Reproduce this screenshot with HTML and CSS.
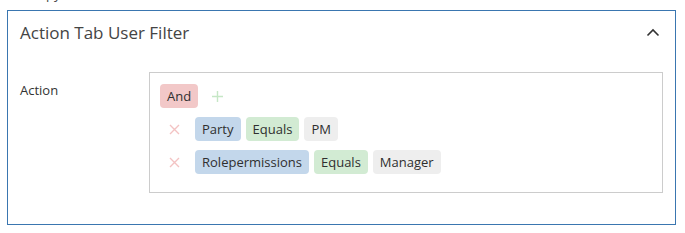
FILE: index.html
```html
<!DOCTYPE html>
<html>
<head>
<meta charset="utf-8">
<link rel="stylesheet" href="styles.css">
</head>
<body>
<div class="prev">Copy</div>
<section class="panel">
  <header class="panel-head">
    <h2 class="panel-title">Action Tab User Filter</h2>
    <svg class="chevron" width="14" height="9" viewBox="0 0 14 9"><path d="M1.5 7.5 L7 2 L12.5 7.5" fill="none" stroke="#333" stroke-width="1.6"/></svg>
  </header>
  <div class="panel-body">
    <div class="field-label">Action</div>
    <div class="filter-box">
      <div class="row">
        <span class="chip chip-and">And</span>
        <svg class="icon-plus" width="11" height="11" viewBox="0 0 11 11"><path d="M5.5 0 V11 M0 5.5 H11" stroke="#c6e7c6" stroke-width="1.4"/></svg>
      </div>
      <div class="row cond">
        <svg class="icon-x" width="11" height="11" viewBox="0 0 11 11"><path d="M1 1 L10 10 M10 1 L1 10" stroke="#f3c3c3" stroke-width="1.4"/></svg>
        <span class="chip chip-field">Party</span>
        <span class="chip chip-op">Equals</span>
        <span class="chip chip-val">PM</span>
      </div>
      <div class="row cond">
        <svg class="icon-x" width="11" height="11" viewBox="0 0 11 11"><path d="M1 1 L10 10 M10 1 L1 10" stroke="#f3c3c3" stroke-width="1.4"/></svg>
        <span class="chip chip-field">Rolepermissions</span>
        <span class="chip chip-op">Equals</span>
        <span class="chip chip-val">Manager</span>
      </div>
    </div>
  </div>
</section>
</body>
</html>
```
FILE: styles.css
```css
* { box-sizing: border-box; }
body {
  margin: 0;
  background: #fff;
  font-family: "Open Sans", "Noto Sans", sans-serif;
  color: #333;
}
.prev {
  font-size: 13px;
  line-height: 16px;
  height: 16px;
  margin-top: -14px;
  margin-left: 30px;
  margin-bottom: 8px;
  color: #444;
}
.panel {
  margin-left: 7px;
  width: 669px;
  height: 215px;
  border: 1px solid #3a76b0;
  background: #fff;
}
.panel-head {
  display: flex;
  align-items: center;
  justify-content: space-between;
  height: 43px;
  padding: 0 15px 0 12px;
}
.panel-title {
  margin: 0;
  font-size: 17px;
  font-weight: 400;
  color: #444;
}
.panel-body {
  display: flex;
  padding: 18px 12px 0 12px;
}
.field-label {
  width: 129px;
  font-size: 13px;
  line-height: 18px;
  padding-top: 9px;
  color: #333;
}
.filter-box {
  width: 514px;
  height: 121px;
  border: 1px solid #cccccc;
  padding: 11px 10px 0 10px;
  display: flex;
  flex-direction: column;
  gap: 9px;
}
.row {
  display: flex;
  align-items: center;
  gap: 5px;
  height: 24px;
}
.row.cond { padding-left: 9px; }
.icon-x { margin-right: 10px; }
.icon-plus { margin-left: 9px; }
.chip {
  display: inline-flex;
  align-items: center;
  height: 24px;
  padding: 0 7px;
  border-radius: 4px;
  font-size: 13px;
  color: #2f2f2f;
}
.chip-and { background: #f2c8c8; }
.chip-field { background: #c3d7eb; }
.chip-op { background: #d2ebd3; }
.chip-val { background: #eeeeee; }
```
